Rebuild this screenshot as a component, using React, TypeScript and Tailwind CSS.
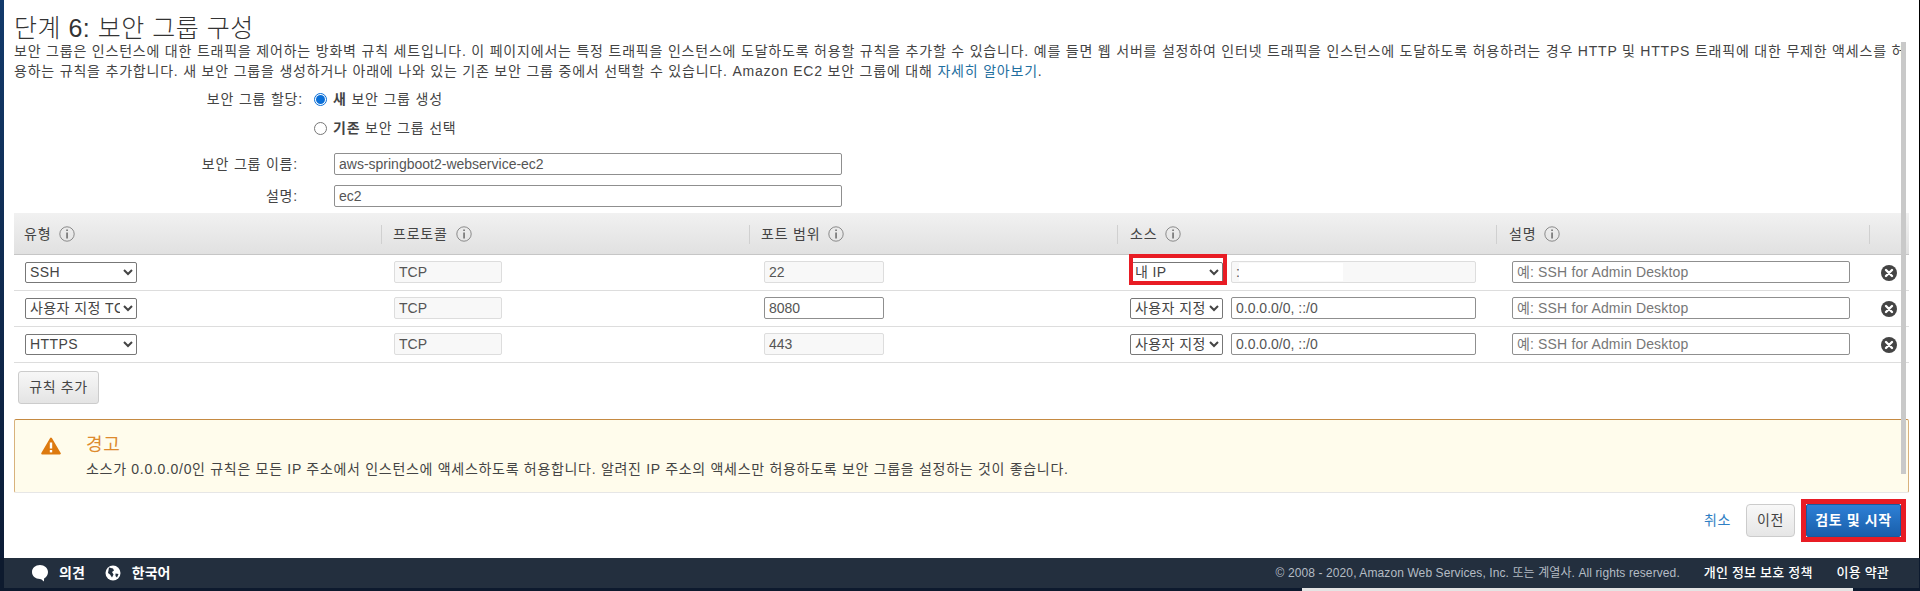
import type { ReactNode } from 'react';

const fieldClass = 'h-[22px] rounded-[2px] border border-[#8f8f8f] bg-white px-[4px] text-[14px] text-[#555] outline-none placeholder:text-[#777]';
const lockedClass = 'h-[22px] rounded-[2px] border border-[#dddddd] bg-[#f8f8f8] px-[4px] text-[14px] text-[#555] outline-none';
const selectClass = 'h-[21px] rounded-[2px] border border-[#777] bg-white text-[14px] tracking-[0.4px] text-[#444] outline-none';

function InfoIcon() {
  return (
    <svg width="16" height="16" viewBox="0 0 16 16" className="ml-[8px] shrink-0">
      <circle cx="8" cy="8" r="7.2" fill="none" stroke="#8a8a8a" strokeWidth="1" />
      <rect x="7.4" y="6.500" width="1.300" height="6" fill="#555" />
      <rect x="7.4" y="3.500" width="1.300" height="1.500" fill="#555" />
    </svg>
  );
}

function RemoveIcon() {
  return (
    <svg width="16" height="16" viewBox="0 0 16 16">
      <circle cx="8" cy="8" r="8" fill="#444" />
      <path d="M5 5l6 6M11 5l-6 6" stroke="#fff" strokeWidth="2.4" strokeLinecap="round" />
    </svg>
  );
}

function HeaderCell({ label, offset, divider = true }: { label: string; offset: string; divider?: boolean }) {
  return (
    <div className="flex h-[19px] items-center">
      {divider && <span className="h-[19px] w-px bg-[#d0d0d0]" />}
      <span className={`${offset} text-[14px] tracking-[0.8px] text-[#444]`}>{label}</span>
      <InfoIcon />
    </div>
  );
}

function Rule({
  type,
  port,
  portLocked,
  source,
  children,
}: {
  type: string;
  port: string;
  portLocked: boolean;
  source: string;
  children: ReactNode;
}) {
  return (
    <div className="grid h-[36px] grid-cols-[367px_368px_368px_379px_373px_40px] items-center border-b border-[#dddddd] pb-px">
      <div className="pl-[11px]">
        <select defaultValue={type} className={`${selectClass} w-[112px]`}>
          <option>SSH</option>
          <option>사용자 지정 TCP</option>
          <option>HTTPS</option>
        </select>
      </div>
      <div className="pl-[13px]">
        <input readOnly defaultValue="TCP" className={`${lockedClass} w-[108px]`} />
      </div>
      <div className="pl-[15px]">
        <input readOnly defaultValue={port} className={`${portLocked ? lockedClass : fieldClass} w-[120px]`} />
      </div>
      <div className="flex items-center gap-[8px] pl-[13px]">
        <select defaultValue={source} className={`${selectClass} w-[93px]`}>
          <option>내 IP</option>
          <option>사용자 지정</option>
        </select>
        {children}
      </div>
      <div className="pl-[16px]">
        <input readOnly placeholder="예: SSH for Admin Desktop" className={`${fieldClass} w-[338px] tracking-[0.15px]`} />
      </div>
      <div className="flex pt-[2px] pl-[12px]">
        <RemoveIcon />
      </div>
    </div>
  );
}

export default function App() {
  return (
    <div className="flex h-[591px] w-[1920px] flex-col overflow-hidden bg-[#0d1a2e] [font-family:'Liberation_Sans','Noto_Sans_CJK_KR',sans-serif] text-[#444]">
      <div className="flex h-[558px]">
        <div className="w-[4px] bg-gradient-to-b from-[#123a6b] to-[#0c1c36]" />
        <main className="relative flex-1 bg-white px-[10px]">
          <h1 className="pt-[16px] text-[25px] leading-[24px] font-light tracking-[0.5px] text-[#333]">단계 6: 보안 그룹 구성</h1>
          <p className="pt-px text-[14px] leading-[20px] tracking-[0.8px] whitespace-nowrap text-[#444]">
            보안 그룹은 인스턴스에 대한 트래픽을 제어하는 방화벽 규칙 세트입니다. 이 페이지에서는 특정 트래픽을 인스턴스에 도달하도록 허용할 규칙을 추가할 수 있습니다. 예를 들면 웹 서버를 설정하여 인터넷 트래픽을 인스턴스에 도달하도록 허용하려는 경우 HTTP 및 HTTPS 트래픽에 대한 무제한 액세스를 허
            <br />
            용하는 규칙을 추가합니다. 새 보안 그룹을 생성하거나 아래에 나와 있는 기존 보안 그룹 중에서 선택할 수 있습니다. Amazon EC2 보안 그룹에 대해{' '}
            <a className="text-[#1f6f9f]">자세히 알아보기</a>.
          </p>

          <div className="mt-[8px] flex h-[20px] items-center text-[14px] tracking-[0.8px]">
            <span className="-ml-[10px] w-[299px] text-right">보안 그룹 할당:</span>
            <span className="ml-[11px] flex h-[13px] w-[13px] items-center justify-center rounded-full border border-[#0a6fd8]">
              <span className="h-[9px] w-[9px] rounded-full bg-[#0a6fd8]" />
            </span>
            <span className="ml-[6px]"><b>새</b> 보안 그룹 생성</span>
          </div>
          <div className="mt-[9px] flex h-[20px] items-center text-[14px] tracking-[0.8px]">
            <span className="-ml-[10px] w-[299px]" />
            <span className="ml-[11px] h-[13px] w-[13px] rounded-full border border-[#777]" />
            <span className="ml-[6px]"><b>기존</b> 보안 그룹 선택</span>
          </div>

          <div className="mt-[15px] flex items-center text-[14px] tracking-[0.8px]">
            <span className="-ml-[10px] w-[294px] text-right">보안 그룹 이름:</span>
            <input readOnly defaultValue="aws-springboot2-webservice-ec2" className={`${fieldClass} ml-[36px] w-[508px] tracking-normal`} />
          </div>
          <div className="mt-[10px] flex items-center text-[14px] tracking-[0.8px]">
            <span className="-ml-[10px] w-[294px] text-right">설명:</span>
            <input readOnly defaultValue="ec2" className={`${fieldClass} ml-[36px] w-[508px] tracking-normal`} />
          </div>

          <div className="mt-[6px] grid h-[42px] grid-cols-[367px_368px_368px_379px_373px_40px] items-center border-b border-[#c6c6c6] bg-gradient-to-b from-[#f1f1f1] to-[#e1e1e1] pt-[1px]">
            <HeaderCell label="유형" offset="ml-[10px]" divider={false} />
            <HeaderCell label="프로토콜" offset="ml-[11px]" />
            <HeaderCell label="포트 범위" offset="ml-[11px]" />
            <HeaderCell label="소스" offset="ml-[12px]" />
            <HeaderCell label="설명" offset="ml-[12px]" />
            <div className="flex h-[19px]"><span className="h-[19px] w-px bg-[#d0d0d0]" /></div>
          </div>

          <Rule type="SSH" port="22" portLocked source="내 IP">
            <span className="relative">
              <input readOnly defaultValue=":" className={`${lockedClass} block w-[245px]`} />
              <span className="absolute top-[2px] left-[8px] h-[18px] w-[104px] bg-white" />
            </span>
          </Rule>
          <Rule type="사용자 지정 TCP" port="8080" portLocked={false} source="사용자 지정">
            <input readOnly defaultValue="0.0.0.0/0, ::/0" className={`${fieldClass} w-[245px]`} />
          </Rule>
          <Rule type="HTTPS" port="443" portLocked source="사용자 지정">
            <input readOnly defaultValue="0.0.0.0/0, ::/0" className={`${fieldClass} w-[245px]`} />
          </Rule>

          <button type="button" className="mt-[8px] ml-[4px] block h-[33px] w-[81px] rounded-[3px] border border-[#cccccc] bg-gradient-to-b from-[#f7f7f7] to-[#e4e4e4] text-[14px] tracking-[0.6px] text-[#444]">
            규칙 추가
          </button>

          <section className="mt-[15px] flex h-[74px] rounded-[2px] border border-t-[#c58a42] border-r-[#d8b27c] border-b-[#e6e6e6] border-l-[#d8b27c] bg-[#fffcec]">
            <svg width="20" height="18" viewBox="0 0 20 18" className="mt-[17px] ml-[26px] shrink-0">
              <path d="M10 1.500 L18.800 16.500 H1.200 Z" fill="#dd7a10" stroke="#dd7a10" strokeWidth="2" strokeLinejoin="round" />
              <rect x="8.800" y="5.500" width="2.400" height="6" fill="#fff" />
              <rect x="8.800" y="13" width="2.400" height="2.400" fill="#fff" />
            </svg>
            <div className="ml-[25px] pt-[14px]">
              <h2 className="text-[18px] leading-[22px] tracking-[0.6px] text-[#dd8a2e]">경고</h2>
              <p className="mt-[3px] text-[14px] leading-[20px] tracking-[0.7px] text-[#444]">
                소스가 0.0.0.0/0인 규칙은 모든 IP 주소에서 인스턴스에 액세스하도록 허용합니다. 알려진 IP 주소의 액세스만 허용하도록 보안 그룹을 설정하는 것이 좋습니다.
              </p>
            </div>
          </section>

          <div className="mt-[11px] flex items-center justify-end pr-[8px]">
            <a className="text-[14px] tracking-[0.6px] text-[#2f7fc4]">취소</a>
            <button type="button" className="ml-[15px] h-[33px] w-[49px] rounded-[4px] border border-[#cccccc] bg-gradient-to-b from-[#f8f8f8] to-[#e6e6e6] text-[14px] tracking-[0.6px] text-[#444]">이전</button>
            <button type="button" className="ml-[11px] h-[33px] w-[95px] rounded-[2px] border border-[#1a5a9c] bg-gradient-to-b from-[#2d80d6] to-[#1a5fab] text-[14px] font-bold tracking-[0.6px] text-white">검토 및 시작</button>
          </div>

          {/* 빨간 강조 표시 */}
          <div className="absolute top-[254px] left-[1125px] h-[31px] w-[98px] border-[4px] border-[#e81c24]" />
          <div className="absolute top-[499px] left-[1797px] h-[43px] w-[105px] border-[5px] border-[#e81c24]" />
          {/* 스크롤바 */}
          <div className="absolute top-[42px] left-[1897px] h-[432px] w-[5px] bg-[#c9c9c9]" />
        </main>
        <div className="w-px bg-black" />
      </div>

      <footer className="ml-[4px] flex h-[30px] w-[1915px] items-center bg-[#232f3e] text-white">
        <svg width="18" height="18" viewBox="0 0 18 18" className="ml-[27px]">
          <path d="M9 1C4.400 1 1 4 1 8s3.400 7 8 7c1 0 2 .8 4 2.500 0-1.500 0-2.500.3-3.200C15.500 13 17 10.700 17 8c0-4-3.600-7-8-7z" fill="#fff" />
        </svg>
        <span className="ml-[10px] text-[14px] font-bold">의견</span>
        <svg width="16" height="16" viewBox="0 0 16 16" className="ml-[20px]">
          <circle cx="8" cy="8" r="7.500" fill="#fff" />
          <path d="M4 2.500l4 1 1 2-2 1.500 1.500 2.500-1.500 3-2-3-2-1.500zM10.500 8.500l3 .5-1.500 3.500-1.500-1.500z" fill="#232f3e" />
        </svg>
        <span className="ml-[11px] text-[14px] font-bold">한국어</span>
        <span className="ml-auto text-[12px] tracking-[0.1px] text-[#b4bcc4]">© 2008 - 2020, Amazon Web Services, Inc. 또는 계열사. All rights reserved.</span>
        <a className="ml-[24px] text-[13px] font-medium tracking-[0.2px]">개인 정보 보호 정책</a>
        <a className="mr-[30px] ml-[24px] text-[13px] font-medium tracking-[0.2px]">이용 약관</a>
      </footer>

      <div className="flex h-[3px]">
        <div className="w-[1302px]" />
        <div className="w-[551px] bg-[#e4e4e4]" />
      </div>
    </div>
  );
}
